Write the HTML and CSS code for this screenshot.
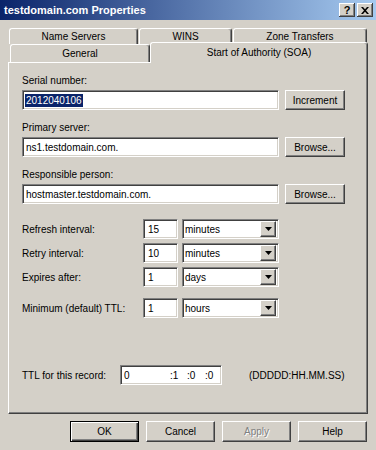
FILE: index.html
```html
<!DOCTYPE html>
<html>
<head>
<meta charset="utf-8">
<title>testdomain.com Properties</title>
<link rel="stylesheet" href="styles.css">
</head>
<body>
<div class="titlebar">
  <span class="title">testdomain.com Properties</span>
  <div class="tbtns">
    <span class="tbtn q">?</span>
    <span class="tbtn"><svg width="8" height="7" viewBox="0 0 8 7"><path d="M0 0h2l2 2.2L6 0h2L5 3.5 8 7H6L4 4.8 2 7H0l3-3.5z" fill="#000"/></svg></span>
  </div>
</div>
<div class="tabs">
  <div class="tabrow back">
    <div class="tab t-ns">Name Servers</div>
    <div class="tab t-wins">WINS</div>
    <div class="tab t-zt">Zone Transfers</div>
  </div>
  <div class="tabrow front">
    <div class="tab t-gen">General</div>
    <div class="tab t-soa active">Start of Authority (SOA)</div>
  </div>
</div>
<div class="panel">
  <div class="group">
    <div class="lbl">Serial number:</div>
    <div class="field">
      <div class="sunk txt"><span class="hl">2012040106</span></div>
      <div class="btn side">Increment</div>
    </div>
  </div>
  <div class="group">
    <div class="lbl">Primary server:</div>
    <div class="field">
      <div class="sunk txt">ns1.testdomain.com.</div>
      <div class="btn side">Browse...</div>
    </div>
  </div>
  <div class="group">
    <div class="lbl">Responsible person:</div>
    <div class="field">
      <div class="sunk txt">hostmaster.testdomain.com.</div>
      <div class="btn side">Browse...</div>
    </div>
  </div>
  <div class="rows">
    <div class="row">
      <div class="rl">Refresh interval:</div>
      <div class="sunk num">15</div>
      <div class="sunk combo"><span class="ctext">minutes</span><span class="btn arrow"><svg width="7" height="4" viewBox="0 0 7 4"><path d="M0 0h7L3.5 4z" fill="#000"/></svg></span></div>
    </div>
    <div class="row">
      <div class="rl">Retry interval:</div>
      <div class="sunk num">10</div>
      <div class="sunk combo"><span class="ctext">minutes</span><span class="btn arrow"><svg width="7" height="4" viewBox="0 0 7 4"><path d="M0 0h7L3.5 4z" fill="#000"/></svg></span></div>
    </div>
    <div class="row">
      <div class="rl">Expires after:</div>
      <div class="sunk num">1</div>
      <div class="sunk combo"><span class="ctext">days</span><span class="btn arrow"><svg width="7" height="4" viewBox="0 0 7 4"><path d="M0 0h7L3.5 4z" fill="#000"/></svg></span></div>
    </div>
    <div class="row spaced">
      <div class="rl">Minimum (default) TTL:</div>
      <div class="sunk num">1</div>
      <div class="sunk combo"><span class="ctext">hours</span><span class="btn arrow"><svg width="7" height="4" viewBox="0 0 7 4"><path d="M0 0h7L3.5 4z" fill="#000"/></svg></span></div>
    </div>
  </div>
  <div class="row ttl">
    <div class="tl">TTL for this record:</div>
    <div class="sunk ttlbox"><span class="c0">0</span><span class="c1">:1</span><span class="c2">:0</span><span class="c3">:0</span></div>
    <div class="hint">(DDDDD:HH.MM.SS)</div>
  </div>
</div>
<div class="actions">
  <div class="btn act def">OK</div>
  <div class="btn act">Cancel</div>
  <div class="btn act dis">Apply</div>
  <div class="btn act">Help</div>
</div>
</body>
</html>
```
FILE: styles.css
```css
* { box-sizing: border-box; }
html, body { margin: 0; padding: 0; }
body {
  width: 376px;
  height: 450px;
  background: #d4d0c8;
  font-family: "Liberation Sans", Arial, sans-serif;
  font-size: 10px;
  color: #000;
  overflow: hidden;
}
.titlebar {
  height: 20px;
  background: linear-gradient(to right, #0a246a, #a6caf0);
  display: flex;
  align-items: center;
  justify-content: space-between;
  padding: 0 3px 0 4px;
}
.title { color: #fff; font-weight: bold; font-size: 11px; }
.tbtns { display: flex; gap: 2px; }
.tbtn {
  width: 16px;
  height: 14px;
  background: #d4d0c8;
  box-shadow: inset -1px -1px #404040, inset 1px 1px #fff, inset -2px -2px #808080;
  display: flex;
  align-items: center;
  justify-content: center;
}
.tbtn.q { font-weight: bold; font-size: 11px; line-height: 14px; }

.tabs { margin-top: 8px; }
.tabrow { display: flex; align-items: flex-start; }
.back { margin-left: 9px; gap: 1px; height: 16px; }
.front { margin-left: 10px; height: 18px; }
.tab {
  background: #d4d0c8;
  border-top: 1px solid #fff;
  border-left: 1px solid #fff;
  border-right: 1px solid #404040;
  box-shadow: inset -1px 0 #808080;
  border-radius: 3px 3px 0 0;
  display: flex;
  align-items: center;
  justify-content: center;
}
.back .tab { height: 16px; }
.t-ns { width: 129px; }
.t-wins { width: 93px; }
.t-zt { width: 134px; }
.t-gen { width: 140px; height: 18px; }
.t-soa { width: 218px; }
.tab.active {
  margin-top: -2px;
  height: 21px;
  padding-bottom: 2px;
  position: relative;
  z-index: 1;
}

.panel {
  margin-left: 8px;
  width: 360px;
  height: 352px;
  border-top: 1px solid #fff;
  border-left: 1px solid #fff;
  border-right: 1px solid #404040;
  border-bottom: 1px solid #404040;
  box-shadow: inset -1px -1px #808080;
  padding: 12px 0 0 13px;
}
.lbl { height: 12px; line-height: 12px; }
.group + .group { margin-top: 12px; }
.field { display: flex; margin-top: 3px; height: 20px; }

.sunk {
  background: #fff;
  border-top: 1px solid #808080;
  border-left: 1px solid #808080;
  border-right: 1px solid #fff;
  border-bottom: 1px solid #fff;
  box-shadow: inset 1px 1px #404040, inset -1px -1px #d4d0c8;
  display: flex;
  align-items: center;
  height: 20px;
}
.btn {
  background: #d4d0c8;
  border-top: 1px solid #fff;
  border-left: 1px solid #fff;
  border-right: 1px solid #404040;
  border-bottom: 1px solid #404040;
  box-shadow: inset -1px -1px #808080;
  display: flex;
  align-items: center;
  justify-content: center;
}
.txt { width: 257px; padding-left: 3px; }
.hl { background: #0a246a; color: #fff; line-height: 13px; padding: 0 1px 0 1px; margin-left: -1px; }
.side { width: 60px; height: 20px; margin-left: 6px; }

.rows { margin-top: 15px; display: flex; flex-direction: column; gap: 4px; }
.row { display: flex; align-items: center; height: 20px; }
.row.spaced { margin-top: 7px; }
.rl { width: 121px; }
.num { width: 35px; padding-left: 4px; }
.combo {
  width: 97px;
  margin-left: 4px;
  padding: 2px 2px 2px 2px;
  justify-content: space-between;
}
.ctext { padding-left: 0; }
.arrow { width: 16px; height: 16px; }

.ttl { margin-top: 47px; }
.tl { width: 98px; }
.ttlbox { width: 102px; padding-left: 3px; }
.c0 { width: 46px; }
.c1 { width: 17px; }
.c2 { width: 18px; }
.hint { margin-left: 27px; }

.actions {
  margin-top: 7px;
  display: flex;
  justify-content: flex-end;
  gap: 7px;
  padding-right: 9px;
}
.act { width: 69px; height: 21px; }
.act.def {
  border: 1px solid #000;
  box-shadow: inset 1px 1px #fff, inset -1px -1px #404040, inset -2px -2px #808080;
}
.act.dis { color: #808080; text-shadow: 1px 1px #fff; }
```
